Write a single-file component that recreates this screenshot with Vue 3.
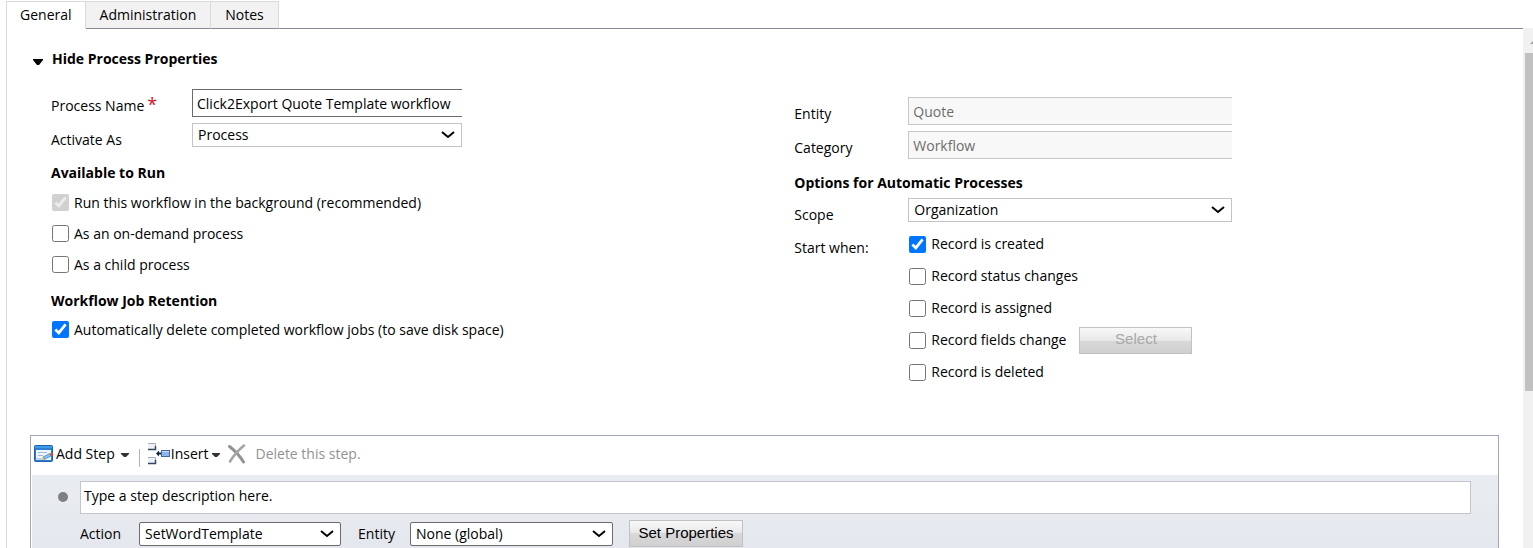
<script setup>
import { ref } from 'vue'

const tabs = ['General', 'Administration', 'Notes']
const activeTab = ref('General')
const processName = ref('Click2Export Quote Template workflow')
const description = ref('Type a step description here.')

const runOptions = ref([
  { id: 'background', label: 'Run this workflow in the background (recommended)', checked: true, disabled: true },
  { id: 'on-demand', label: 'As an on-demand process', checked: false },
  { id: 'child', label: 'As a child process', checked: false }
])
const autoDelete = ref(true)
const triggers = ref([
  { id: 'created', label: 'Record is created', checked: true },
  { id: 'status', label: 'Record status changes', checked: false },
  { id: 'assigned', label: 'Record is assigned', checked: false },
  { id: 'fields', label: 'Record fields change', checked: false, button: true },
  { id: 'deleted', label: 'Record is deleted', checked: false }
])
</script>

<template>
  <div class="page">
    <nav class="tabs" role="tablist">
      <button
        v-for="tab in tabs"
        :key="tab"
        type="button"
        role="tab"
        class="tab"
        :class="{ active: tab === activeTab }"
        :aria-selected="tab === activeTab"
        @click="activeTab = tab"
      >{{ tab }}</button>
      <span class="tab-line"></span>
    </nav>

    <div class="body">
      <main class="content">
        <button type="button" class="toggle">
          <svg width="10" height="6" viewBox="0 0 10 6" aria-hidden="true"><path d="M0 0h10v1L6 6H4L0 1z" fill="#000" /></svg>
          <span>Hide Process Properties</span>
        </button>

        <div class="columns">
          <section class="left">
            <div class="field">
              <label for="name">Process Name<span class="required">*</span></label>
              <input id="name" v-model="processName" type="text" class="text strong">
            </div>
            <div class="field">
              <label for="activate">Activate As</label>
              <span class="select">
                <select id="activate"><option>Process</option></select>
                <svg class="chevron" viewBox="0 0 14 8" aria-hidden="true"><path d="M1 1l6 5 6-5" /></svg>
              </span>
            </div>
            <h2>Available to Run</h2>
            <div v-for="o in runOptions" :key="o.id" class="check">
              <input :id="o.id" v-model="o.checked" type="checkbox" :disabled="o.disabled">
              <label :for="o.id">{{ o.label }}</label>
            </div>
            <h2 class="retention">Workflow Job Retention</h2>
            <div class="check">
              <input id="auto-delete" v-model="autoDelete" type="checkbox">
              <label for="auto-delete">Automatically delete completed workflow jobs (to save disk space)</label>
            </div>
          </section>

          <section class="right">
            <div class="field">
              <label for="entity">Entity</label>
              <input id="entity" type="text" class="text" value="Quote" disabled>
            </div>
            <div class="field">
              <label for="category">Category</label>
              <input id="category" type="text" class="text" value="Workflow" disabled>
            </div>
            <h2>Options for Automatic Processes</h2>
            <div class="field scope">
              <label for="scope">Scope</label>
              <span class="select">
                <select id="scope"><option>Organization</option></select>
                <svg class="chevron" viewBox="0 0 14 8" aria-hidden="true"><path d="M1 1l6 5 6-5" /></svg>
              </span>
            </div>
            <div class="triggers" role="group" aria-labelledby="start-when">
              <span id="start-when" class="start">Start when:</span>
              <div>
                <div v-for="t in triggers" :key="t.id" class="check">
                  <input :id="t.id" v-model="t.checked" type="checkbox">
                  <label :for="t.id">{{ t.label }}</label>
                  <button v-if="t.button" type="button" class="push pick" disabled>Select</button>
                </div>
              </div>
            </div>
          </section>
        </div>

        <section class="steps">
          <div class="toolbar">
            <button type="button" class="tool add">
              <svg width="20" height="18" viewBox="0 0 20 18" aria-hidden="true">
                <rect x="0.5" y="0.5" width="18" height="16" rx="1" fill="#2f7fd0" stroke="#1b62b5" />
                <path d="M1 2h17" stroke="#3c9bea" stroke-width="2" />
                <path d="M2 5h15v10H2z" fill="#eef5fb" />
                <path d="M4 7.500h9M4 10.500h5" stroke="#9cbad6" />
                <path d="M2 13h5v2H2z" fill="#b8d7ef" />
                <path d="M9 12l7-3.500 1 2.500-7 3.500z" fill="#8cc4f0" stroke="#3975b2" stroke-width="0.7" />
                <path d="M9 12l1 2.500L6.500 15z" fill="#f0b668" />
                <path d="M16 8.500l2.500-1 1 2.500-2.500 1z" fill="#d94b2b" />
              </svg>
              <span>Add Step</span>
              <svg class="caret" width="8" height="5" viewBox="0 0 8 5" aria-hidden="true"><path d="M0 0h8v1L5 4H3L0 1z" fill="#333" /></svg>
            </button>
            <span class="divider"></span>
            <button type="button" class="tool insert">
              <svg width="24" height="22" viewBox="0 0 24 22" aria-hidden="true">
                <path d="M1 1h8v6H1zM1 15h8v6H1z" fill="#eef1f6" />
                <path d="M1 .5h7.500v6H1M1 14.500h7.500v6H1" fill="none" stroke="#a3acbd" />
                <path d="M1 6.500h7.500V3M1 20.500h7.500V17" fill="none" stroke="#344665" stroke-width="1.500" />
                <path d="M9 10.500l3-3v2h2v2h-2v2z" fill="#14213d" />
                <rect x="14.500" y="7.500" width="8" height="6" fill="#8bb6ef" stroke="#4567a0" />
                <path d="M15 8.500h7" stroke="#c4dcfa" />
              </svg>
              <span>Insert</span>
              <svg class="caret" width="8" height="5" viewBox="0 0 8 5" aria-hidden="true"><path d="M0 0h8v1L5 4H3L0 1z" fill="#333" /></svg>
            </button>
            <button type="button" class="tool delete" disabled>
              <svg width="18" height="20" viewBox="0 0 18 20" aria-hidden="true">
                <path d="M1.500 2.500Q10 9 15.500 18" fill="none" stroke="#929292" stroke-width="3" stroke-linecap="round" />
                <path d="M16 1.500Q7 9 2 17.500" fill="none" stroke="#a4a4a4" stroke-width="2.500" stroke-linecap="round" />
              </svg>
              <span>Delete this step.</span>
            </button>
          </div>

          <div class="step">
            <span class="bullet"></span>
            <input v-model="description" type="text" class="description" aria-label="Step description">
            <div class="action-row">
              <label for="action">Action</label>
              <span class="select dark action">
                <select id="action"><option>SetWordTemplate</option></select>
                <svg class="chevron" viewBox="0 0 14 8" aria-hidden="true"><path d="M1 1l6 5 6-5" /></svg>
              </span>
              <label for="target">Entity</label>
              <span class="select dark target">
                <select id="target"><option>None (global)</option></select>
                <svg class="chevron" viewBox="0 0 14 8" aria-hidden="true"><path d="M1 1l6 5 6-5" /></svg>
              </span>
              <button type="button" class="push props">Set Properties</button>
            </div>
          </div>
        </section>
      </main>

      <div class="scrollbar" aria-hidden="true">
        <svg width="8" height="25" viewBox="0 0 8 25"><path d="M5 16l4-4v4z" fill="#a3a3a3" /></svg>
        <div class="thumb"></div>
      </div>
    </div>
  </div>
</template>

<style>
body {
  margin: 0;
  background: #fff;
}
</style>

<style scoped>
.page,
.page * {
  box-sizing: border-box;
}
.page {
  display: flex;
  flex-direction: column;
  height: 100vh;
  padding: 1px 0 0 6px;
  overflow: hidden;
  font-family: "Segoe UI", "Open Sans", "Noto Sans", sans-serif;
  font-size: 14px;
  line-height: 20px;
  color: #000;
}
button,
input,
select {
  margin: 0;
  font: inherit;
  color: inherit;
  border-radius: 0;
}
.tabs {
  display: flex;
  flex: none;
  height: 28px;
}
.tab {
  padding: 0 14px;
  border: 1px solid #dadada;
  border-left: 0;
  border-bottom: 1px solid #8b8893;
  background: #f2f2f2;
}
.tab.active {
  padding: 0 13px;
  border-left: 1px solid #dadada;
  border-bottom-color: #fff;
  background: #fff;
}
.tab-line {
  flex: 1;
  margin-right: 10px;
  border-bottom: 1px solid #8b8893;
}
.body {
  display: flex;
  flex: 1;
  min-height: 0;
}
.content {
  display: flex;
  flex: 1;
  flex-direction: column;
  min-width: 0;
  padding: 20px 24px 0 23px;
  border-left: 1px solid #dadada;
}
.toggle {
  display: flex;
  flex: none;
  align-items: center;
  gap: 9px;
  height: 20px;
  padding: 0 0 0 3px;
  border: 0;
  background: none;
  font-weight: 700;
}
.toggle svg {
  margin-top: 6px;
}
.columns {
  display: grid;
  flex: none;
  grid-template-columns: 51fr 50fr;
  height: 366px;
  margin-right: -24px;
  padding: 20px 0 0 21px;
}
.right {
  padding-top: 8px;
}
.field {
  display: flex;
  align-items: flex-start;
  height: 34px;
}
.field label {
  flex: none;
  width: 141px;
  padding-top: 7px;
}
.right .field label,
.start {
  flex: none;
  width: 114px;
}
.required {
  margin-left: 3px;
  color: #d3141c;
  font-size: 18px;
  line-height: 0;
}
.text {
  flex: 0 1 270px;
  min-width: 0;
  height: 28px;
  padding: 0 4px;
  border: 1px solid #c8c8c8;
  border-right: 0;
  background: #f8f8f8;
}
.text:disabled {
  color: #6d6d6d;
}
.text.strong {
  border-color: #6b6b6b;
  background: #fff;
}
.right .text,
.right .select {
  flex-basis: 324px;
}
.select {
  display: grid;
  flex: 0 1 270px;
  align-items: center;
  height: 24px;
}
.select select {
  grid-area: 1 / 1;
  width: 100%;
  height: 100%;
  padding: 0 24px 0 5px;
  border: 1px solid #c4c4c4;
  background: #fff;
  appearance: none;
}
.chevron {
  grid-area: 1 / 1;
  justify-self: end;
  width: 14px;
  height: 8px;
  margin-right: 7px;
  fill: none;
  stroke: #000;
  stroke-width: 2;
  pointer-events: none;
}
.select.dark select {
  border-color: #6b6b6b;
  border-radius: 2px;
}
h2 {
  height: 28px;
  margin: 2px 0 0;
  font-size: 14px;
  font-weight: 700;
  line-height: 28px;
}
h2.retention {
  margin-top: 7px;
}
.right h2 {
  margin-top: 4px;
}
.scope {
  height: 31px;
  padding-top: 1px;
}
.triggers {
  display: flex;
}
.start {
  padding-top: 10px;
}
.check {
  display: flex;
  align-items: center;
  height: 31px;
}
.retention + .check {
  height: 29px;
}
.right .check {
  height: 32px;
}
.check input {
  width: 17px;
  height: 17px;
  margin: 0 5px 0 1px;
  accent-color: #0075ff;
}
.push {
  height: 27px;
  padding: 0 0 2px;
  border: 1px solid #c1c1c5;
  background: linear-gradient(#f8f8f8, #e8e8e8 50%, #d9d9d9 50%, #d0d0d0);
  font-family: "Liberation Sans", Arial, sans-serif;
  font-size: 15px;
}
.push:disabled {
  color: #a8a8a8;
}
.pick {
  width: 113px;
  margin-left: 13px;
}
.steps {
  display: flex;
  flex: 1;
  flex-direction: column;
  border: 1px solid #a3a6b4;
  border-bottom: 0;
}
.toolbar {
  display: flex;
  flex: none;
  align-items: center;
  height: 39px;
  padding: 0 0 3px 3px;
}
.tool {
  display: flex;
  align-items: center;
  padding: 0;
  border: 0;
  background: none;
}
.add {
  gap: 2px;
}
.tool .caret {
  margin: 2px 0 0 4px;
}
.divider {
  width: 1px;
  height: 18px;
  margin: 7px 7px 0 10px;
  background: #aeb3bd;
}
.delete {
  gap: 9px;
  margin-left: 8px;
  color: #929292;
}
.step {
  display: grid;
  flex: 1;
  grid-template-columns: 48px 1fr;
  align-content: start;
  row-gap: 6px;
  margin-left: 1px;
  padding: 6px 27px 0 0;
  background: linear-gradient(#e9edf1, #e4e8ee);
}
.bullet {
  width: 10px;
  height: 10px;
  margin: 11px 0 0 26px;
  border-radius: 50%;
  background: #7d7f83;
}
.description {
  width: 100%;
  height: 33px;
  padding: 0 3px 4px;
  border: 1px solid #c2c4ce;
  background: #fff;
}
.action-row {
  display: flex;
  grid-column: 2;
  align-items: center;
}
.action {
  flex-basis: 202px;
  margin: 0 17px 0 18px;
}
.target {
  flex-basis: 203px;
  margin: 0 16px 0 15px;
}
.props {
  width: 114px;
}
.scrollbar {
  flex: none;
  width: 10px;
  margin-top: -1px;
  padding-left: 2px;
  background: #f1f1f1;
}
.scrollbar svg {
  display: block;
}
.thumb {
  height: 65%;
  background: #c1c1c1;
}
</style>
